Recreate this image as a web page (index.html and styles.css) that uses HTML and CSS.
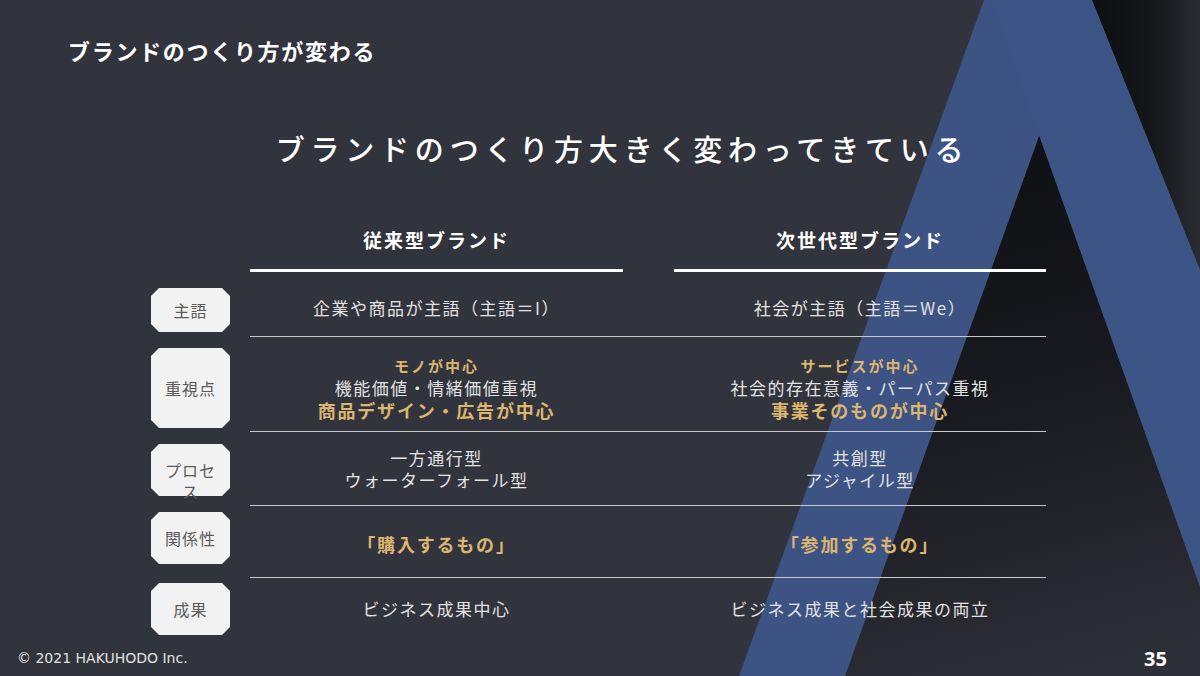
FILE: index.html
```html
<!DOCTYPE html>
<html lang="ja">
<head>
<meta charset="utf-8">
<title>ブランドのつくり方が変わる</title>
<link rel="stylesheet" href="styles.css">
</head>
<body>
<div class="slide">
  <svg class="bg" width="1200" height="676" viewBox="0 0 1200 676" aria-hidden="true">
    <defs>
      <linearGradient id="inner" x1="1040" y1="135" x2="1170" y2="660" gradientUnits="userSpaceOnUse">
        <stop offset="0" stop-color="#0f1013"/>
        <stop offset="0.45" stop-color="#191a1f"/>
        <stop offset="1" stop-color="#2e3037"/>
      </linearGradient>
      <linearGradient id="corner" x1="1092" y1="0" x2="1200" y2="0" gradientUnits="userSpaceOnUse">
        <stop offset="0" stop-color="#0e0f12"/>
        <stop offset="0.55" stop-color="#15161a"/>
        <stop offset="1" stop-color="#2b2c31"/>
      </linearGradient>
    </defs>
    <rect width="1200" height="676" fill="#32343d"/>
    <polygon points="1039,135 1200,587 1200,676 845,676" fill="url(#inner)"/>
    <polygon points="1092,0 1200,0 1200,270" fill="url(#corner)"/>
    <polygon points="984,0 1088,0 845,676 739,676" fill="#3c5383"/>
    <polygon points="991,0 1092,0 1200,270 1200,587" fill="#3d5586"/>
  </svg>

  <div class="top-title">ブランドのつくり方が変わる</div>
  <h1 class="headline">ブランドのつくり方大きく変わってきている</h1>

  <div class="compare">
    <div class="labels">
      <div class="label l-short">主語</div>
      <div class="label l-tall">重視点</div>
      <div class="label">プロセス</div>
      <div class="label">関係性</div>
      <div class="label l-last">成果</div>
    </div>

    <div class="table">
      <div class="heads">
        <div class="head">従来型ブランド</div>
        <div class="head">次世代型ブランド</div>
      </div>
      <div class="row r1">
        <div class="cell">企業や商品が主語（主語＝I）</div>
        <div class="cell">社会が主語（主語＝We）</div>
      </div>
      <div class="row r2">
        <div class="cell">
          <div class="gold sm">モノが中心</div>
          <div>機能価値・情緒価値重視</div>
          <div class="gold lg">商品デザイン・広告が中心</div>
        </div>
        <div class="cell">
          <div class="gold sm">サービスが中心</div>
          <div>社会的存在意義・パーパス重視</div>
          <div class="gold lg">事業そのものが中心</div>
        </div>
      </div>
      <div class="row r3">
        <div class="cell">
          <div>一方通行型</div>
          <div>ウォーターフォール型</div>
        </div>
        <div class="cell">
          <div>共創型</div>
          <div>アジャイル型</div>
        </div>
      </div>
      <div class="row r4">
        <div class="cell"><div class="gold lg">「購入するもの」</div></div>
        <div class="cell"><div class="gold lg">「参加するもの」</div></div>
      </div>
      <div class="row r5">
        <div class="cell">ビジネス成果中心</div>
        <div class="cell">ビジネス成果と社会成果の両立</div>
      </div>
    </div>
  </div>

  <footer class="foot">
    <span class="copy">© 2021 HAKUHODO Inc.</span>
    <span class="page">35</span>
  </footer>
</div>
</body>
</html>
```

FILE: styles.css
```css
html, body {
  margin: 0;
  padding: 0;
  background: #32343d;
}

.slide {
  position: relative;
  width: 1200px;
  height: 676px;
  overflow: hidden;
  display: flex;
  flex-direction: column;
  font-family: "Noto Sans CJK JP", "Noto Sans", sans-serif;
  color: #e2e2e2;
}

.bg {
  position: absolute;
  left: 0;
  top: 0;
  z-index: 0;
}

.top-title,
.headline,
.compare,
.foot {
  position: relative;
  z-index: 1;
}

.top-title {
  padding: 35px 0 0 68px;
  font-size: 22px;
  line-height: 30px;
  font-weight: 700;
  letter-spacing: 1.7px;
  color: #ffffff;
}

.headline {
  margin: 63px 0 0;
  padding-left: 45px;
  text-align: center;
  font-size: 29px;
  line-height: 40px;
  font-weight: 500;
  letter-spacing: 5.8px;
  color: #ffffff;
}

.compare {
  display: flex;
  gap: 20px;
  margin-left: 151px;
}

.labels {
  width: 79px;
  padding-top: 120px;
  display: flex;
  flex-direction: column;
}

.label {
  position: relative;
  isolation: isolate;
  box-sizing: border-box;
  height: 52px;
  margin-top: 16px;
  padding: 16px 10px 0;
  font-size: 16px;
  line-height: 21px;
  letter-spacing: 1px;
  color: #5a5a5a;
  text-align: center;
}

.label::before {
  content: "";
  position: absolute;
  inset: 0;
  z-index: -1;
  background: #f2f2f2;
  clip-path: polygon(8px 0, calc(100% - 8px) 0, 100% 8px, 100% calc(100% - 8px), calc(100% - 8px) 100%, 8px 100%, 0 calc(100% - 8px), 0 8px);
}

.label.l-short {
  margin-top: 0;
  height: 44px;
  padding-top: 12px;
}

.label.l-tall {
  height: 80px;
  padding-top: 30px;
}

.label.l-last {
  margin-top: 19px;
}

.table {
  width: 796px;
}

.heads,
.row {
  display: grid;
  grid-template-columns: 373px 372px;
  column-gap: 51px;
}

.head {
  padding: 58px 0 15px;
  font-size: 19px;
  line-height: 28px;
  font-weight: 700;
  letter-spacing: 2px;
  color: #ffffff;
  text-align: center;
  border-bottom: 3px solid #ffffff;
}

.row {
  box-sizing: border-box;
  border-bottom: 1px solid #c9c9c9;
}

.cell {
  text-align: center;
  font-size: 17px;
  line-height: 24px;
  letter-spacing: 1.5px;
  color: #e2e2e2;
}

.r1 { height: 65px; padding-top: 24px; }
.r2 { height: 95px; padding-top: 18px; }
.r3 { height: 74px; padding-top: 15px; }
.r4 { height: 72px; padding-top: 26px; }
.r5 { height: 62px; padding-top: 19px; border-bottom: none; }

.r2 .cell,
.r3 .cell {
  line-height: 22px;
}

.gold {
  color: #dcb56f;
  font-weight: 700;
}

.gold.sm {
  font-size: 15px;
  letter-spacing: 2px;
}

.gold.lg {
  font-size: 18px;
  letter-spacing: 1.8px;
}

.foot {
  margin-top: auto;
  height: 24px;
  padding: 0 33px 6px 17px;
  display: flex;
  justify-content: space-between;
  align-items: center;
}

.copy {
  font-family: "DejaVu Sans", sans-serif;
  font-size: 14px;
  color: #e0e0e0;
}

.page {
  font-family: "Noto Sans", sans-serif;
  font-size: 20px;
  font-weight: 700;
  color: #ffffff;
}
```
